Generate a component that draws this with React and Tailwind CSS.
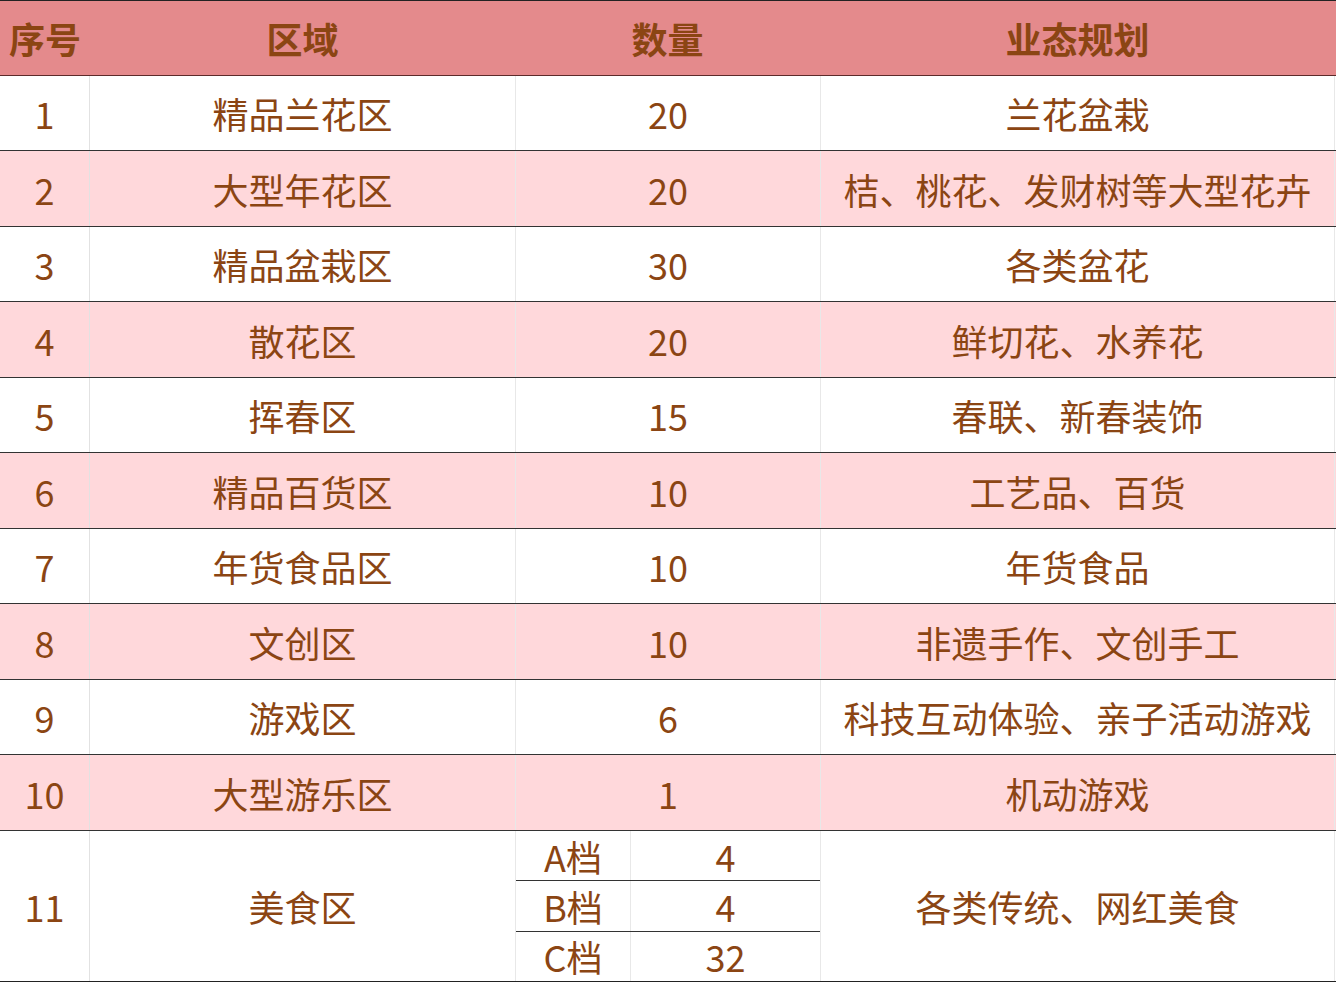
const rows = [
  ['1', '精品兰花区', '20', '兰花盆栽'],
  ['2', '大型年花区', '20', '桔、桃花、发财树等大型花卉'],
  ['3', '精品盆栽区', '30', '各类盆花'],
  ['4', '散花区', '20', '鲜切花、水养花'],
  ['5', '挥春区', '15', '春联、新春装饰'],
  ['6', '精品百货区', '10', '工艺品、百货'],
  ['7', '年货食品区', '10', '年货食品'],
  ['8', '文创区', '10', '非遗手作、文创手工'],
  ['9', '游戏区', '6', '科技互动体验、亲子活动游戏'],
  ['10', '大型游乐区', '1', '机动游戏'],
];

const food = [
  ['A档', '4'],
  ['B档', '4'],
  ['C档', '32'],
];

export default function App() {
  return (
    <div
      className="w-[1336px] h-[983px] bg-white text-[#8b4513] text-[36px] leading-none"
      style={{ fontFamily: '"Noto Sans CJK SC", "Noto Sans", sans-serif' }}
    >
      {/* Header */}
      <div className="flex h-[76px] bg-[#e48a8c] border-t border-b border-t-[#222] border-b-[#5c2a2a] font-bold">
        <div className="w-[90px] flex items-center justify-center whitespace-nowrap">序号</div>
        <div className="w-[425px] flex items-center justify-center">区域</div>
        <div className="w-[305px] flex items-center justify-center">数量</div>
        <div className="w-[515px] flex items-center justify-center">业态规划</div>
      </div>

      {rows.map((r, i) => (
        <div
          key={r[0]}
          className={`flex border-b border-[#333] ${i % 2 === 0 ? 'h-[75px] bg-white' : 'h-[76px] bg-[#ffd8db]'}`}
        >
          <div className="w-[90px] flex items-center justify-center border-r border-[#e2e2e2]">{r[0]}</div>
          <div className="w-[425px] flex items-center justify-center">{r[1]}</div>
          <div className="w-[305px] flex items-center justify-center border-l border-[#e8e8e8]">{r[2]}</div>
          <div className="w-[515px] flex items-center justify-center border-l border-r border-[#e8e8e8] whitespace-nowrap">{r[3]}</div>
        </div>
      ))}

      {/* Food row */}
      <div className="flex h-[151px] border-b border-[#222] bg-white">
        <div className="w-[90px] flex items-center justify-center border-r border-[#e2e2e2]">11</div>
        <div className="w-[425px] flex items-center justify-center">美食区</div>
        <div className="w-[305px] flex flex-col border-l border-[#e8e8e8]">
          {food.map((f, i) => (
            <div key={f[0]} className={`flex flex-1 ${i < 2 ? 'border-b border-[#333]' : ''}`}>
              <div className="w-[115px] flex items-center justify-center border-r border-[#e8e8e8]">{f[0]}</div>
              <div className="flex-1 flex items-center justify-center">{f[1]}</div>
            </div>
          ))}
        </div>
        <div className="w-[515px] flex items-center justify-center border-l border-r border-[#e8e8e8]">各类传统、网红美食</div>
      </div>
    </div>
  );
}
